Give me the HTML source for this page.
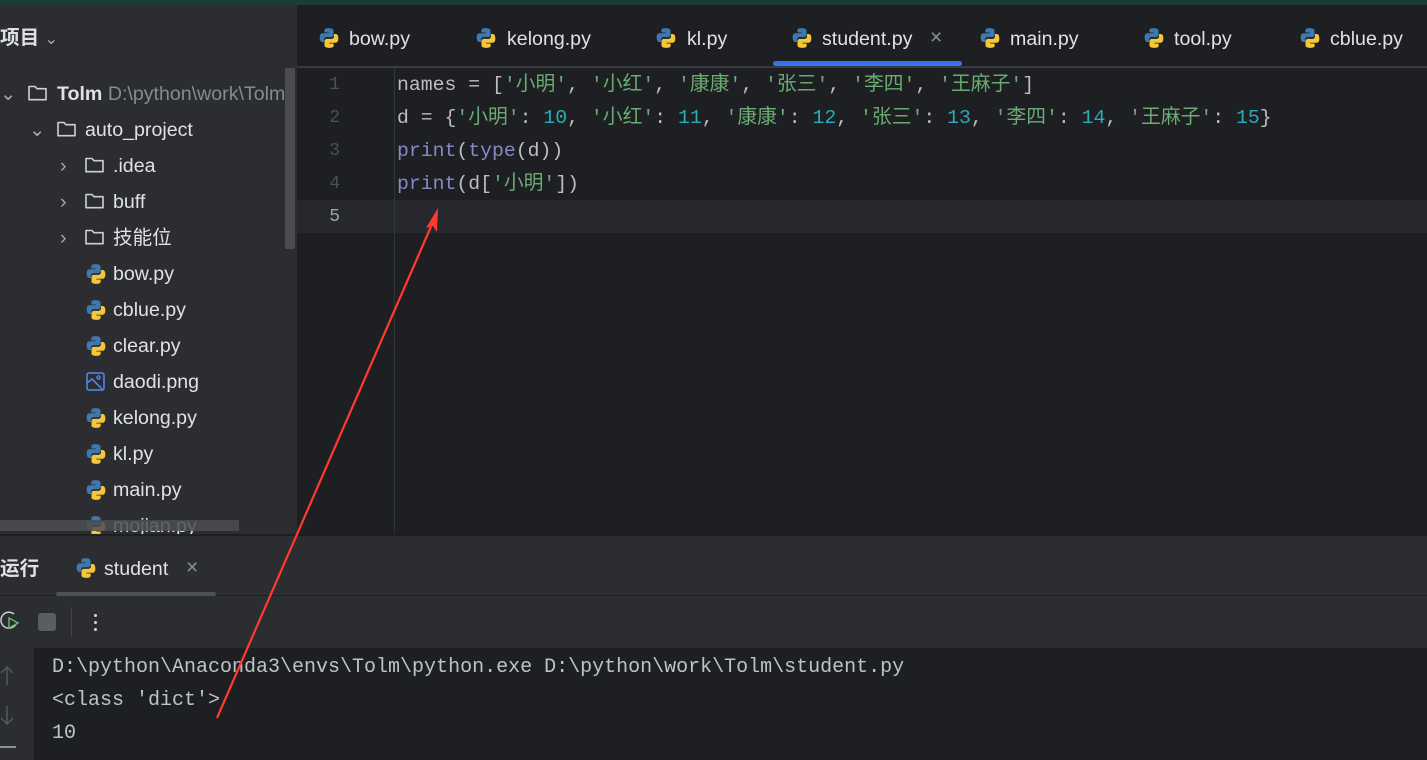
<!DOCTYPE html>
<html><head><meta charset="utf-8"><style>
*{margin:0;padding:0;box-sizing:border-box}
body{width:1427px;height:760px;background:#1e1f22;position:relative;overflow:hidden;font-family:"Liberation Sans","Noto Sans CJK SC",sans-serif;color:#dfe1e5}
.a{position:absolute;white-space:nowrap}
svg.a{margin-top:2px}
svg.arr{margin-top:0}
.ui{font-size:19.6px;line-height:24px;margin-top:2px}
.mono{font-family:"Liberation Mono","Noto Sans CJK SC",monospace;font-size:19.8px;line-height:33px}
.s{color:#6aab73}.n{color:#2aacb8}.f{color:#8888c6}
.ln{color:#4b5059;font-family:"Liberation Mono",monospace;font-size:18px;text-align:right;width:40px}
</style></head><body>
<svg width="0" height="0" style="position:absolute"><defs>
<g id="py"><path d="M9.5 1C5.5 1 5.8 2.8 5.8 2.8V5h3.9v.7H4.2S1.5 5.4 1.5 9.6s2.4 4 2.4 4H5.5v-2s-.1-2.4 2.4-2.4h3.9s2.3 0 2.3-2.2V3.3S14.4 1 9.5 1z" fill="#3d79ae"/><path d="M10.5 19c4 0 3.7-1.8 3.7-1.8V15h-3.9v-.7h5.5s2.7.3 2.7-3.9-2.4-4-2.4-4H14.5v2s.1 2.4-2.4 2.4H8.2s-2.3 0-2.3 2.2v3.7S5.6 19 10.5 19z" fill="#f4c73b"/></g>
<g id="fd"><path d="M2 4.5h6l2 2.2h9v11H2z" fill="none" stroke="#ced0d6" stroke-width="1.6" stroke-linejoin="round"/></g>
</defs></svg>
<div class="a" style="left:0;top:0;width:1427px;height:5px;background:#1d3b39"></div>
<div class="a" style="left:0;top:5px;width:297px;height:530px;background:#2b2d30"></div>
<div class="a ui" style="left:0;top:24px;font-weight:bold">项目 <span style="font-weight:normal;color:#aaa;font-size:16px">&#8964;</span></div>
<div class="a" style="left:285px;top:68px;width:10px;height:181px;background:#4b4d51;border-radius:2px"></div>
<div class="a ui" style="left:0;top:80px;color:#aaa">&#8964;</div>
<svg class="a" style="left:27px;top:80px" width="24" height="24"><use href="#fd"/></svg>
<div class="a ui" style="left:57px;top:80px"><b>Tolm</b> <span style="color:#868a91"> D:\python\work\Tolm</span></div>
<div class="a ui" style="left:29px;top:116px;color:#aaa">&#8964;</div>
<svg class="a" style="left:56px;top:116px" width="24" height="24"><use href="#fd"/></svg>
<div class="a ui" style="left:85px;top:116px">auto_project</div>
<div class="a ui" style="left:60px;top:152px;color:#aaa">&#8250;</div><svg class="a" style="left:84px;top:152px" width="24" height="24"><use href="#fd"/></svg><div class="a ui" style="left:113px;top:152px">.idea</div>
<div class="a ui" style="left:60px;top:188px;color:#aaa">&#8250;</div><svg class="a" style="left:84px;top:188px" width="24" height="24"><use href="#fd"/></svg><div class="a ui" style="left:113px;top:188px">buff</div>
<div class="a ui" style="left:60px;top:224px;color:#aaa">&#8250;</div><svg class="a" style="left:84px;top:224px" width="24" height="24"><use href="#fd"/></svg><div class="a ui" style="left:113px;top:224px">技能位</div>
<svg class="a" style="left:85px;top:261px" width="22" height="22" viewBox="0 0 20 20"><use href="#py"/></svg><div class="a ui" style="left:113px;top:260px">bow.py</div>
<svg class="a" style="left:85px;top:297px" width="22" height="22" viewBox="0 0 20 20"><use href="#py"/></svg><div class="a ui" style="left:113px;top:296px">cblue.py</div>
<svg class="a" style="left:85px;top:333px" width="22" height="22" viewBox="0 0 20 20"><use href="#py"/></svg><div class="a ui" style="left:113px;top:332px">clear.py</div>
<svg class="a" style="left:85px;top:369px" width="22" height="22"><rect x="2" y="2" width="17" height="17" rx="2" fill="none" stroke="#548af7" stroke-width="1.5"/><circle cx="13.5" cy="6.5" r="1.6" fill="none" stroke="#548af7" stroke-width="1.3"/><path d="M2 12l5-4 10 10" fill="none" stroke="#548af7" stroke-width="1.5"/></svg><div class="a ui" style="left:113px;top:368px">daodi.png</div>
<svg class="a" style="left:85px;top:405px" width="22" height="22" viewBox="0 0 20 20"><use href="#py"/></svg><div class="a ui" style="left:113px;top:404px">kelong.py</div>
<svg class="a" style="left:85px;top:441px" width="22" height="22" viewBox="0 0 20 20"><use href="#py"/></svg><div class="a ui" style="left:113px;top:440px">kl.py</div>
<svg class="a" style="left:85px;top:477px" width="22" height="22" viewBox="0 0 20 20"><use href="#py"/></svg><div class="a ui" style="left:113px;top:476px">main.py</div>
<svg class="a" style="left:85px;top:513px" width="22" height="22" viewBox="0 0 20 20"><use href="#py"/></svg><div class="a ui" style="left:113px;top:512px">mojian.py</div>
<div class="a" style="left:0;top:520px;width:239px;height:11px;background:#4b4d51;opacity:.85"></div>
<div class="a" style="left:297px;top:66px;width:1130px;height:2px;background:#393b40"></div>
<svg class="a" style="left:318px;top:25px" width="22" height="22" viewBox="0 0 20 20"><use href="#py"/></svg><div class="a ui" style="left:349px;top:25px">bow.py</div>
<svg class="a" style="left:475px;top:25px" width="22" height="22" viewBox="0 0 20 20"><use href="#py"/></svg><div class="a ui" style="left:507px;top:25px">kelong.py</div>
<svg class="a" style="left:655px;top:25px" width="22" height="22" viewBox="0 0 20 20"><use href="#py"/></svg><div class="a ui" style="left:687px;top:25px">kl.py</div>
<svg class="a" style="left:791px;top:25px" width="22" height="22" viewBox="0 0 20 20"><use href="#py"/></svg><div class="a ui" style="left:822px;top:25px">student.py</div><div class="a ui" style="left:930px;top:24px;color:#8c8f94;font-size:21px">×</div>
<div class="a" style="left:773px;top:61px;width:189px;height:5px;background:#3574f0;border-radius:3px"></div>
<svg class="a" style="left:979px;top:25px" width="22" height="22" viewBox="0 0 20 20"><use href="#py"/></svg><div class="a ui" style="left:1010px;top:25px">main.py</div>
<svg class="a" style="left:1143px;top:25px" width="22" height="22" viewBox="0 0 20 20"><use href="#py"/></svg><div class="a ui" style="left:1174px;top:25px">tool.py</div>
<svg class="a" style="left:1299px;top:25px" width="22" height="22" viewBox="0 0 20 20"><use href="#py"/></svg><div class="a ui" style="left:1330px;top:25px">cblue.py</div>
<div class="a" style="left:297px;top:200px;width:1130px;height:33px;background:#26282e"></div>
<div class="a" style="left:394px;top:68px;width:1px;height:467px;background:#313438"></div>
<div class="a ln" style="left:300px;top:69px;line-height:33px">1<br>2<br>3<br>4<br><span style="color:#a1a3ab">5</span></div>
<div class="a mono" style="left:397px;top:69px;color:#bcbec4">names = [<span class="s">'小明'</span>, <span class="s">'小红'</span>, <span class="s">'康康'</span>, <span class="s">'张三'</span>, <span class="s">'李四'</span>, <span class="s">'王麻子'</span>]<br>d = {<span class="s">'小明'</span>: <span class="n">10</span>, <span class="s">'小红'</span>: <span class="n">11</span>, <span class="s">'康康'</span>: <span class="n">12</span>, <span class="s">'张三'</span>: <span class="n">13</span>, <span class="s">'李四'</span>: <span class="n">14</span>, <span class="s">'王麻子'</span>: <span class="n">15</span>}<br><span class="f">print</span>(<span class="f">type</span>(d))<br><span class="f">print</span>(d[<span class="s">'小明'</span>])</div>
<div class="a" style="left:0;top:534px;width:1427px;height:114px;background:#2b2d30;border-top:2px solid #1e1f22"></div>
<div class="a" style="left:0;top:595px;width:1427px;height:1px;background:#1e1f22"></div>
<div class="a ui" style="left:0;top:555px;font-weight:bold">运行</div>
<svg class="a" style="left:75px;top:555px" width="22" height="22" viewBox="0 0 20 20"><use href="#py"/></svg><div class="a ui" style="left:104px;top:555px">student</div><div class="a ui" style="left:186px;top:554px;color:#8c8f94;font-size:21px">×</div>
<div class="a" style="left:56px;top:592px;width:160px;height:4px;background:#4e5157;border-radius:2px"></div>
<svg class="a arr" style="left:0;top:608px" width="20" height="28"><path d="M14 6a8 8 0 1 0 2 10" fill="none" stroke="#ced0d6" stroke-width="1.5"/><path d="M9 10l9 5-9 5z" fill="none" stroke="#5fb865" stroke-width="1.5"/></svg>
<div class="a" style="left:38px;top:613px;width:18px;height:18px;background:#5a5d63;border-radius:3px"></div>
<div class="a" style="left:71px;top:607px;width:1px;height:30px;background:#43454a"></div>
<div class="a" style="left:94px;top:612px;width:3px;height:20px;background:radial-gradient(circle,#ced0d6 1.4px,transparent 1.6px) 0 0/3px 7px"></div>
<div class="a" style="left:0;top:648px;width:34px;height:112px;background:#2b2d30"></div>
<svg class="a arr" style="left:0;top:664px" width="16" height="64"><path d="M7 3v18M1 9l6-6 6 6M7 42v18M1 54l6 6 6-6" fill="none" stroke="#55585d" stroke-width="1.5"/></svg>
<div class="a" style="left:0;top:746px;width:16px;height:2px;background:#8c8f94"></div>
<div class="a mono" style="left:52px;top:650px;font-size:20px;line-height:33px;padding-top:1px;color:#bcc3cc">D:\python\Anaconda3\envs\Tolm\python.exe D:\python\work\Tolm\student.py<br>&lt;class 'dict'&gt;<br>10</div>
<svg class="a arr" style="left:0;top:0" width="1427" height="760"><line x1="217" y1="718" x2="433" y2="222" stroke="#ff3b30" stroke-width="2.2"/><path d="M438 208l-12 20 7-2 4 6z" fill="#ff3b30"/></svg>
</body></html>
